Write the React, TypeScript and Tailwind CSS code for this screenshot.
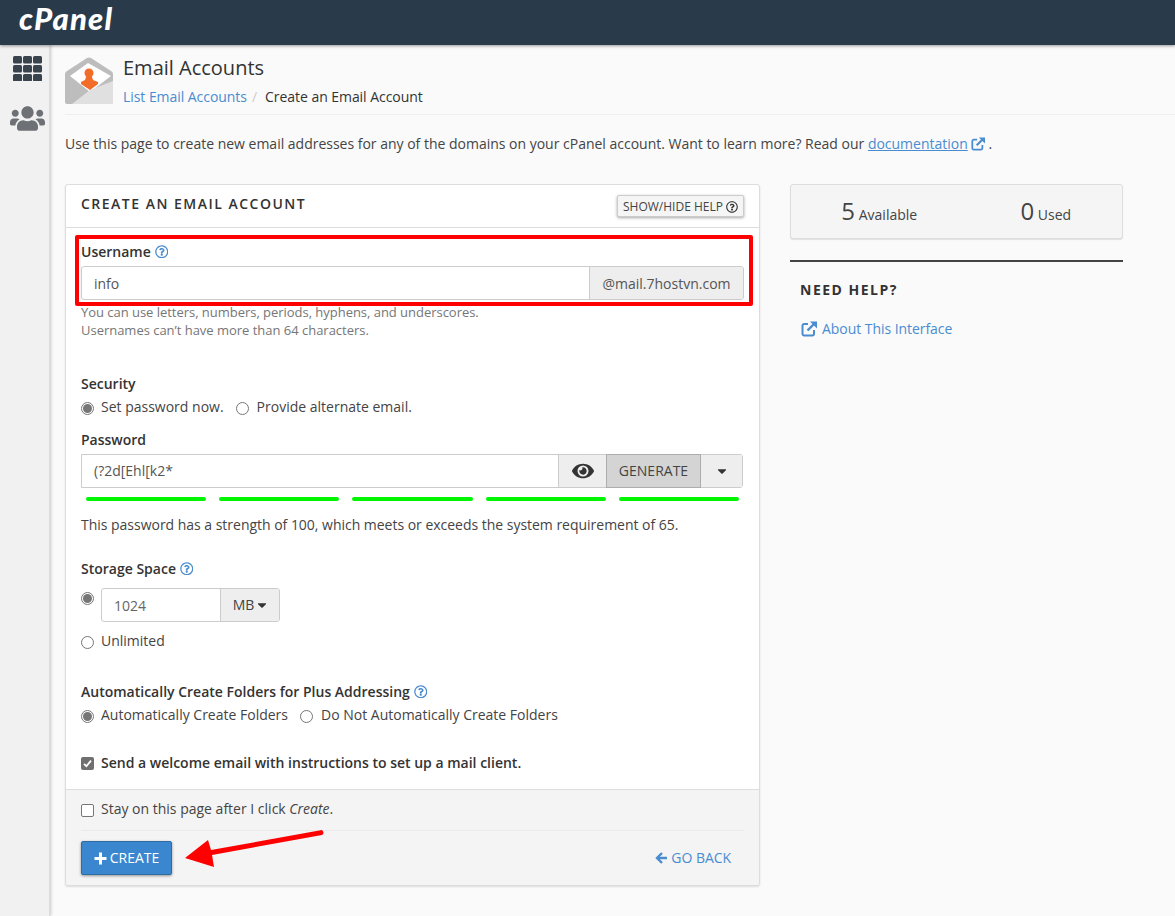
import React from "react";
import { FaUsers, FaRegQuestionCircle, FaEye, FaCaretDown } from "react-icons/fa";

const Radio = ({ on = false }: { on?: boolean }) => (
  <span className="relative block w-[13px] h-[13px] shrink-0 rounded-full border border-[#767676] bg-white">
    {on && <span className="absolute left-[1px] top-[1px] w-[9px] h-[9px] rounded-full bg-[#767676]" />}
  </span>
);

const Help = () => <FaRegQuestionCircle className="inline-block text-[#4a8cd0] text-[13.5px] ml-[4px] align-[-1px]" />;

const ExtLink = ({ size }: { size: number }) => (
  <svg width={size} height={size} viewBox="0 0 16 16" className="inline-block shrink-0 align-[-2px] text-[#4a8cd0]" fill="none" stroke="currentColor">
    <path d="M7 3H3.2A1.7 1.7 0 0 0 1.5 4.7v8.1A1.7 1.7 0 0 0 3.2 14.5h8.1A1.7 1.7 0 0 0 13 12.8V9" strokeWidth="2" />
    <path d="M6.5 9.5 L13.5 2.5" strokeWidth="2.4" />
    <path d="M9 0.5 H16 V7.5Z" fill="currentColor" stroke="none" />
  </svg>
);

const Label = ({ children, className = "" }: { children: React.ReactNode; className?: string }) => (
  <div className={`h-[20px] leading-[20px] font-semibold text-[#333] ${className}`}>{children}</div>
);

const Bar = () => <div className="h-[4px] rounded-full bg-[#00f500]" />;

export default function App() {
  return (
    <div className="relative h-screen overflow-hidden bg-[#fafafa] text-[14px] leading-[20px] text-[#444]" style={{ fontFamily: '"Open Sans", sans-serif' }}>
      <header className="relative z-10 h-[45px] bg-[#293a4a] shadow-[0_1px_3px_rgba(0,0,0,0.4)] pl-[19px]">
        <span className="block text-white font-black italic text-[31px] leading-[37px] tracking-[1.2px]" style={{ fontFamily: 'Lato, sans-serif' }}>cPanel</span>
      </header>

      <div className="flex h-[871px]">
        <aside className="w-[50px] shrink-0 bg-[#f1f1f1] border-r border-[#dcdcdc] shadow-[1px_0_3px_rgba(0,0,0,0.2)] flex flex-col items-start">
          <svg width="29" height="25" viewBox="0 0 29 25" className="mt-[11px] ml-[13px]" fill="#39434e">
            {[0, 10, 20].map((x) => [0, 9, 18].map((y) => <rect key={`${x}-${y}`} x={x} y={y} width="9" height="7.4" rx="1.5" />))}
          </svg>
          <FaUsers className="mt-[20px] ml-[10px] text-[35px] text-[#6d7175]" />
        </aside>

        <main className="flex-1 pl-[15px]">
          <div className="flex h-[70px] border-b border-[#eeeeee] pt-[12px]">
            <svg width="48" height="47" viewBox="0 0 48 47" className="shrink-0">
              <path d="M0 17 Q0 15 2 14 L22 1 Q24 0 26 1 L46 14 Q48 15 48 17 V45 Q48 47 46 47 H2 Q0 47 0 45Z" fill="#bdbdbd" />
              <path d="M5 19 L23 6 L46 19 L25 35Z" fill="#ffffff" />
              <path d="M48 24 V45 Q48 47 46 47 H7 L25 33 L30 31Z" fill="#e0e0e0" />
              <circle cx="24" cy="16" r="4.5" fill="#f26c2a" />
              <path d="M21 20 H27 L28 23 L33 25 V27 L25 33 L16 27 V25 L20 23Z" fill="#f26c2a" />
            </svg>
            <div className="ml-[10px] -mt-px">
              <h1 className="text-[20px] leading-[24px] text-[#333]">Email Accounts</h1>
              <div className="mt-[7px] h-[20px] flex">
                <span className="text-[#4a8cd0] tracking-[-0.05px]">List Email Accounts</span>
                <span className="text-[#ccc] ml-[5px] mr-[8px]">/</span>
                <span className="text-[#333] tracking-[-0.05px]">Create an Email Account</span>
              </div>
            </div>
          </div>

          <p className="mt-[19px] h-[20px] whitespace-nowrap tracking-[-0.008px]">
            Use this page to create new email addresses for any of the domains on your cPanel account. Want to learn more? Read our{" "}
            <span className="text-[#4a8cd0] underline">documentation</span>
            <span className="ml-[3px]"><ExtLink size={14} /></span> .
          </p>

          <div className="mt-[30px] flex gap-[30px] items-start">
            <section className="w-[695px] h-[702px] rounded-[3px] border border-[#dddddd] bg-white shadow-[0_1px_2px_rgba(0,0,0,0.12)] flex flex-col overflow-hidden">
              <div className="h-[43px] shrink-0 border-b border-[#dddddd] flex justify-between pl-[15px] pr-[15px]">
                <h2 className="mt-[9px] text-[14px] leading-[20px] font-semibold tracking-[1.49px] text-[#333]">CREATE AN EMAIL ACCOUNT</h2>
                <button className="mt-[10px] h-[22px] w-[127px] pt-px border border-[#ccc] rounded-[2px] bg-[#f5f5f5] shadow-[0_1px_3px_rgba(0,0,0,0.35)] text-[12px] text-[#444] flex items-center justify-center gap-[3px]">
                  SHOW/HIDE HELP <FaRegQuestionCircle className="text-[12px] text-[#333]" />
                </button>
              </div>

              <div className="flex-1 px-[15px] pt-[14px]">
                <Label>Username<Help /></Label>
                <div className="mt-[4px] flex h-[34px] border border-[#cccccc] rounded-[3px] overflow-hidden">
                  <div className="flex-1 pl-[12px] leading-[34px] text-[#555]">info</div>
                  <div className="w-[154px] border-l border-[#cccccc] bg-[#eeeeee] text-center leading-[34px] text-[#555]">@mail.7hostvn.com</div>
                </div>
                <div className="mt-[3px] text-[13px] leading-[18px] text-[#767676]">
                  <div className="tracking-[-0.03px]">You can use letters, numbers, periods, hyphens, and underscores.</div>
                  <div className="tracking-[-0.02px]">Usernames can’t have more than 64 characters.</div>
                </div>

                <Label className="mt-[35px]">Security</Label>
                <div className="mt-[3px] h-[20px] flex items-center">
                  <span className="mt-[2px]"><Radio on /></span><span className="ml-[7px]">Set password now.</span>
                  <span className="ml-[12px] mt-[2px]"><Radio /></span><span className="ml-[8px]">Provide alternate email.</span>
                </div>

                <Label className="mt-[13px]">Password</Label>
                <div className="mt-[4px] mr-px flex h-[34px] border border-[#cccccc] rounded-r-[3px]">
                  <div className="flex-1 pl-[12px] leading-[32px] text-[#555]">(?2d[Ehl[k2*</div>
                  <div className="w-[48px] border-l border-[#cccccc] bg-[#eeeeee] flex items-center justify-center"><FaEye className="text-[22px] text-[#333]" /></div>
                  <div className="w-[95px] border border-[#adadad] -my-px bg-[#d4d4d4] text-center leading-[32px] text-[#444]">GENERATE</div>
                  <div className="w-[41px] bg-[#eeeeee] flex items-center justify-center"><FaCaretDown className="text-[14px] text-[#333]" /></div>
                </div>
                <div className="mt-[9px] grid grid-cols-5 gap-[13px] px-[5px]"><Bar /><Bar /><Bar /><Bar /><Bar /></div>
                <div className="mt-[14px] tracking-[-0.02px]">This password has a strength of 100, which meets or exceeds the system requirement of 65.</div>

                <Label className="mt-[24px]">Storage Space<Help /></Label>
                <div className="mt-[9px] flex items-start">
                  <span className="mt-[4px] flex"><Radio on /></span>
                  <div className="ml-[7px] flex h-[34px] w-[179px] border border-[#cccccc] rounded-[3px] overflow-hidden">
                    <div className="w-[118px] pl-[12px] leading-[34px] text-[#666]">1024</div>
                    <div className="flex-1 pl-[2px] border-l border-[#cccccc] bg-[#eeeeee] flex items-center justify-center text-[#444]">MB<FaCaretDown className="text-[14px] text-[#333] ml-[1px]" /></div>
                  </div>
                </div>
                <div className="mt-[9px] h-[20px] flex items-center"><span className="mt-[2px]"><Radio /></span><span className="ml-[7px]">Unlimited</span></div>

                <Label className="mt-[31px]">Automatically Create Folders for Plus Addressing<Help /></Label>
                <div className="mt-[3px] h-[20px] flex items-center">
                  <span className="mt-[2px]"><Radio on /></span><span className="ml-[7px]">Automatically Create Folders</span>
                  <span className="ml-[12px] mt-[2px]"><Radio /></span><span className="ml-[8px]">Do Not Automatically Create Folders</span>
                </div>

                <div className="mt-[28px] h-[20px] flex items-center">
                  <span className="w-[13px] h-[13px] rounded-[2px] bg-[#6f6f6f] flex items-center justify-center">
                    <svg width="9" height="9" viewBox="0 0 9 9" fill="none" stroke="#fff" strokeWidth="1.8"><path d="M1 4.8 L3.4 7.2 L8 1.6" /></svg>
                  </span>
                  <span className="ml-[7px] font-semibold text-[#333]">Send a welcome email with instructions to set up a mail client.</span>
                </div>
              </div>

              <div className="h-[96px] shrink-0 border-t border-[#dddddd] bg-[#f4f4f4] px-[15px] pt-[9px]">
                <div className="h-[20px] flex items-center">
                  <span className="mt-[2px] w-[13px] h-[13px] rounded-[2px] border border-[#767676] bg-white" />
                  <span className="ml-[7px]">Stay on this page after I click <em>Create</em>.</span>
                </div>
                <div className="mt-[11px] border-t border-[#eaeaea]" />
                <div className="mt-[10px] flex items-center justify-between">
                  <button className="h-[34px] w-[91px] rounded-[2px] border border-[#2e6da4] bg-[#3a87cf] text-white shadow-[0_1px_3px_rgba(0,0,0,0.4)] flex items-center justify-center gap-[3px]">
                    <svg width="13" height="13" viewBox="0 0 13 13" fill="currentColor"><path d="M5 0.5 H8 V5 H12.5 V8 H8 V12.5 H5 V8 H0.5 V5 H5Z" /></svg>
                    CREATE
                  </button>
                  <span className="mr-[13px] text-[#4a8cd0] flex items-center gap-[4px] tracking-[-0.05px]">
                    <svg width="12" height="12" viewBox="0 0 12 12" fill="none" stroke="currentColor" strokeWidth="2.4"><path d="M12 6 H2.5 M7 1 L2 6 L7 11" /></svg>
                    GO BACK
                  </span>
                </div>
              </div>
            </section>

            <aside className="w-[333px]">
              <div className="h-[55px] pl-[6px] pt-[2px] rounded-[3px] border border-[#dddddd] bg-[#f5f5f5] shadow-[0_1px_1px_rgba(0,0,0,0.1)] grid grid-cols-[165.5px_165.5px] items-center text-center">
                <div className="-ml-[1px]"><span className="text-[24px] text-[#444]">5</span> <span>Available</span></div>
                <div className="ml-[1px]"><span className="text-[24px] text-[#444]">0</span> <span>Used</span></div>
              </div>
              <div className="mt-[21px] h-[2px] bg-[#444]" />
              <h3 className="mt-[18px] ml-[10px] font-bold tracking-[1.5px] text-[#333]">NEED HELP?</h3>
              <div className="mt-[19px] ml-[11px] text-[#4a8cd0] flex items-center gap-[5px] tracking-[-0.05px]"><ExtLink size={16} />About This Interface</div>
            </aside>
          </div>
        </main>
      </div>

      <div className="absolute left-[75px] top-[235px] w-[678px] h-[71px] border-[4px] border-[#ff0000] rounded-[2px] pointer-events-none" />
      <svg className="absolute left-[180px] top-[825px] pointer-events-none" width="150" height="50" viewBox="0 0 150 50" fill="#ff0000">
        <path d="M5 33 L28 15 L31 25 L142 5 Q145 8 142 10 L32 30 L34 42Z" />
      </svg>
    </div>
  );
}
